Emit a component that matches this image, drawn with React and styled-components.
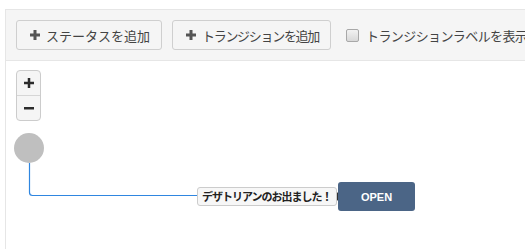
import React from "react";
import styled, { createGlobalStyle } from "styled-components";

const Global = createGlobalStyle`
  html, body { margin: 0; padding: 0; background: #fff; overflow: hidden; }
  body { font-family: "Noto Sans CJK JP", "Noto Sans", sans-serif; color: #333; }
`;

const Page = styled.div`
  padding: 9px 0 0 5px;
  width: 525px;
  height: 249px;
  box-sizing: border-box;
  overflow: hidden;
`;

const Panel = styled.div`
  border-top: 1px solid #e6e6e6;
  border-left: 1px solid #e6e6e6;
  height: 240px;
  display: flex;
  flex-direction: column;
`;

const Toolbar = styled.div`
  display: flex;
  align-items: center;
  gap: 10px;
  padding: 10px;
  background: #f5f5f5;
  border-bottom: 1px solid #e6e6e6;
  white-space: nowrap;
  overflow: hidden;
`;

const Button = styled.button`
  display: flex;
  flex-shrink: 0;
  align-items: center;
  gap: 6px;
  height: 30px;
  padding: 0 11px 0 13px;
  background: #f5f5f5;
  border: 1px solid #cfcfcf;
  border-radius: 3px;
  font-family: inherit;
  font-size: 13px;
  letter-spacing: ${(p) => (p.$tight ? "-1.3px" : "0")};
  color: #444;
  line-height: 1;
`;

const CheckLabel = styled.label`
  display: flex;
  flex-shrink: 0;
  align-items: center;
  gap: 7px;
  margin-left: 5px;
  font-size: 13px;
  letter-spacing: -0.6px;
  color: #444;
`;

const Check = styled.span`
  width: 11px;
  height: 11px;
  border: 1px solid #a8a8a8;
  border-radius: 2px;
  background: linear-gradient(#f2f2f2, #d8d8d8);
`;

const Canvas = styled.div`
  position: relative;
  flex: 1;
`;

const ZoomControl = styled.div`
  position: absolute;
  left: 10px;
  top: 9px;
  width: 23px;
  border: 1px solid #cccccc;
  border-radius: 4px;
  background: #f5f5f5;
  overflow: hidden;
`;

const ZoomBtn = styled.div`
  height: 24px;
  display: flex;
  align-items: center;
  justify-content: center;
  border-top: ${(p) => (p.$divider ? "1px solid #d6d6d6" : "none")};
`;

const Edges = styled.svg`
  position: absolute;
  left: 0;
  top: 0;
`;

const EdgeLabel = styled.div`
  position: absolute;
  left: 191px;
  top: 126px;
  height: 17px;
  padding: 0 4px;
  display: flex;
  align-items: center;
  background: #f7f7f7;
  border: 1px solid #cccccc;
  border-radius: 3px;
  font-size: 11px;
  letter-spacing: -1px;
  font-weight: 700;
  color: #222;
  white-space: nowrap;
  line-height: 1;
`;

const StateNode = styled.div`
  position: absolute;
  left: 332px;
  top: 121px;
  width: 77px;
  height: 29px;
  border-radius: 3px;
  background: #4b6586;
  color: #fff;
  display: flex;
  align-items: center;
  justify-content: center;
  font-family: "Liberation Sans", Arial, sans-serif;
  font-weight: 700;
  font-size: 11px;
`;

const Plus = ({ size = 10, color = "#555", t = 3 }) => (
  <svg width={size} height={size} viewBox={`0 0 ${size} ${size}`}>
    <rect x={(size - t) / 2} y="0" width={t} height={size} fill={color} />
    <rect x="0" y={(size - t) / 2} width={size} height={t} fill={color} />
  </svg>
);

export default function App() {
  return (
    <>
      <Global />
      <Page>
        <Panel>
          <Toolbar>
            <Button>
              <Plus />
              ステータスを追加
            </Button>
            <Button $tight>
              <Plus />
              トランジションを追加
            </Button>
            <CheckLabel>
              <Check />
              トランジションラベルを表示
            </CheckLabel>
          </Toolbar>
          <Canvas>
            <ZoomControl>
              <ZoomBtn>
                <Plus size={10} color="#2b2b2b" t={2.5} />
              </ZoomBtn>
              <ZoomBtn $divider>
                <svg width="10" height="3" viewBox="0 0 10 3">
                  <rect width="10" height="2.5" fill="#2b2b2b" />
                </svg>
              </ZoomBtn>
            </ZoomControl>
            <Edges width="420" height="180">
              <circle cx="23" cy="87" r="15" fill="#bfbfbf" />
              <path
                d="M23.5 102 V131.5 Q23.5 134.5 26.5 134.5 H192"
                fill="none"
                stroke="#2f86e0"
                strokeWidth="1.2"
              />
              <circle cx="331" cy="135.5" r="4" fill="#333" />
            </Edges>
            <EdgeLabel>デザトリアンのお出ました！</EdgeLabel>
            <StateNode>OPEN</StateNode>
          </Canvas>
        </Panel>
      </Page>
    </>
  );
}
